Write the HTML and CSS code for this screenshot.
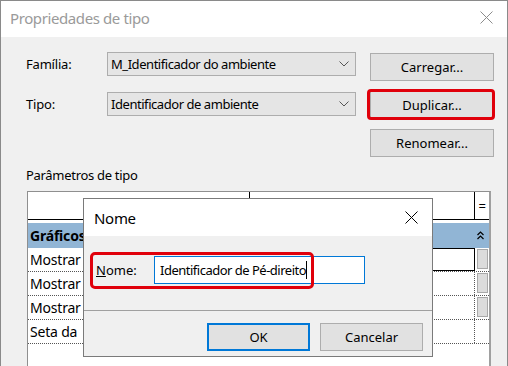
FILE: index.html
```html
<!DOCTYPE html>
<html lang="pt">
<head>
<meta charset="utf-8">
<title>Propriedades de tipo</title>
<link rel="stylesheet" href="styles.css">
</head>
<body>
<div class="window">
  <div class="titlebar">
    <span class="title">Propriedades de tipo</span>
    <svg class="close" width="13" height="13" viewBox="0 0 13 13"><path d="M0.5 0.5 L12.5 12.5 M12.5 0.5 L0.5 12.5" stroke="#8c8c8c" stroke-width="1" fill="none"/></svg>
  </div>
  <div class="content">
    <div class="top">
      <div class="fields">
        <div class="field">
          <span class="lbl">Família:</span>
          <div class="combo"><span class="ctext">M_Identificador do ambiente</span><svg class="chev" width="10" height="6" viewBox="0 0 10 6"><path d="M0.5 0.5 L5 5 L9.5 0.5" stroke="#555" stroke-width="1" fill="none"/></svg></div>
        </div>
        <div class="field">
          <span class="lbl">Tipo:</span>
          <div class="combo"><span class="ctext">Identificador de ambiente</span><svg class="chev" width="10" height="6" viewBox="0 0 10 6"><path d="M0.5 0.5 L5 5 L9.5 0.5" stroke="#555" stroke-width="1" fill="none"/></svg></div>
        </div>
      </div>
      <div class="buttons">
        <div class="btn">Carregar...</div>
        <div class="btn marked">Duplicar...</div>
        <div class="btn">Renomear...</div>
      </div>
    </div>
    <div class="params-label">Parâmetros de tipo</div>
    <div class="grid">
      <div class="ghead">
        <div class="c1"></div>
        <div class="c2"></div>
        <div class="c3 eq">=</div>
      </div>
      <div class="group">
        <span class="gname">Gráficos</span>
        <svg class="collapse" width="7" height="9" viewBox="0 0 7 9"><path d="M0.5 4 L3.5 1 L6.5 4 M0.5 8 L3.5 5 L6.5 8" stroke="#000" stroke-width="1.2" fill="none"/></svg>
      </div>
      <div class="row">
        <div class="c1">Mostrar</div>
        <div class="c2"><div class="valbox"></div></div>
        <div class="c3"><div class="mini"></div></div>
      </div>
      <div class="row">
        <div class="c1">Mostrar</div>
        <div class="c2"></div>
        <div class="c3"><div class="mini"></div></div>
      </div>
      <div class="row">
        <div class="c1">Mostrar</div>
        <div class="c2"></div>
        <div class="c3"><div class="mini"></div></div>
      </div>
      <div class="row">
        <div class="c1">Seta da</div>
        <div class="c2"></div>
        <div class="c3"></div>
      </div>
    </div>
  </div>

  <div class="dialog">
    <div class="dtitlebar">
      <span class="dtitle">Nome</span>
      <svg class="dclose" width="13" height="13" viewBox="0 0 13 13"><path d="M0.5 0.5 L12.5 12.5 M12.5 0.5 L0.5 12.5" stroke="#000" stroke-width="1" fill="none"/></svg>
    </div>
    <div class="dbody">
      <div class="namerow">
        <span class="nlabel"><u>N</u>ome:</span>
        <div class="ninput"><span class="ntext">Identificador de Pé-direito</span></div>
        <div class="redmark"></div>
      </div>
      <div class="sep"></div>
      <div class="dbuttons">
        <div class="dbtn ok">OK</div>
        <div class="dbtn">Cancelar</div>
      </div>
    </div>
  </div>
</div>
</body>
</html>
```

FILE: styles.css
```css
html, body {
  margin: 0;
  padding: 0;
  background: #f0f0f0;
}
body {
  font-family: "Noto Sans", "Open Sans", sans-serif;
  font-size: 13px;
  color: #000;
}
.window {
  position: relative;
  width: 508px;
  height: 366px;
  box-sizing: border-box;
  border: 1px solid #8a8a8a;
  border-bottom: none;
  background: #f0f0f0;
  overflow: hidden;
}
.titlebar {
  height: 36px;
  background: #fff;
  display: flex;
  align-items: center;
  justify-content: space-between;
  padding: 0 14px 0 9px;
}
.title {
  font-size: 15px;
  letter-spacing: -0.4px;
  color: #9a9a9a;
  margin-top: -2px;
}
.close {
  margin-top: -3px;
}
.content {
  padding: 15px 12px 0 25px;
}
.top {
  display: flex;
  gap: 14px;
}
.fields {
  display: flex;
  flex-direction: column;
  gap: 16px;
}
.field {
  display: flex;
  align-items: center;
  height: 24px;
}
.lbl {
  width: 81px;
  letter-spacing: -0.2px;
}
.combo {
  width: 249px;
  height: 24px;
  box-sizing: border-box;
  border: 1px solid #adadad;
  background: #e5e5e5;
  display: flex;
  align-items: center;
  justify-content: space-between;
  padding: 0 6px 0 3px;
}
.ctext {
  letter-spacing: -0.45px;
}
.buttons {
  display: flex;
  flex-direction: column;
  gap: 10px;
  margin-top: 1px;
}
.btn {
  position: relative;
  width: 124px;
  height: 28px;
  box-sizing: border-box;
  border: 1px solid #adadad;
  background: #e1e1e1;
  display: flex;
  align-items: center;
  justify-content: center;
}
.btn.marked::after {
  content: "";
  position: absolute;
  left: -4px;
  top: -3px;
  right: -2px;
  bottom: -2px;
  border: 3px solid #e0000b;
  border-radius: 4px;
}
.params-label {
  margin-top: 9px;
  height: 18px;
  line-height: 18px;
  letter-spacing: -0.3px;
}
.grid {
  margin-top: 7px;
  margin-left: 1px;
  width: 464px;
  height: 200px;
  box-sizing: border-box;
  border: 1px solid #8f8f8f;
  border-right: 2px solid #a0a0a0;
  background: #fff;
  font-size: 14px;
  letter-spacing: -0.2px;
}
.ghead, .row {
  display: grid;
  grid-template-columns: 222px 225px 1fr;
}
.ghead {
  height: 28px;
  box-sizing: border-box;
  border-bottom: 1px solid #000;
}
.ghead .c1, .ghead .c2 {
  border-right: 1px solid #000;
}
.eq {
  display: flex;
  align-items: center;
  justify-content: center;
  font-size: 13px;
}
.group {
  margin-top: 3px;
  height: 25px;
  background: #91b5d5;
  display: flex;
  align-items: center;
  justify-content: space-between;
  padding: 0 5px 0 2px;
}
.gname {
  font-weight: bold;
}
.row {
  height: 24px;
  box-sizing: border-box;
  border-bottom: 1px dotted #555;
}
.row .c1 {
  padding-left: 2px;
  line-height: 23px;
}
.row .c2 {
  border-right: 1px dotted #555;
}
.valbox {
  height: 23px;
  box-sizing: border-box;
  border: 1px solid #000;
  margin-right: -1px;
  background: #fff;
}
.row .c3 {
  display: flex;
  justify-content: center;
  padding-top: 1px;
}
.mini {
  width: 11px;
  height: 20px;
  box-sizing: border-box;
  background: #dcdcdc;
  border: 1px solid #a9a9a9;
}

/* Nome dialog */
.dialog {
  position: absolute;
  left: 82px;
  top: 197px;
  width: 350px;
  height: 159px;
  box-sizing: border-box;
  border: 1px solid #7a7a7a;
  background: #f0f0f0;
  font-size: 13px;
}
.dtitlebar {
  height: 37px;
  background: #fff;
  display: flex;
  align-items: center;
  justify-content: space-between;
  padding: 0 14px 0 10px;
}
.dtitle {
  font-size: 15px;
  letter-spacing: -0.3px;
}
.dbody {
  padding-top: 20px;
}
.namerow {
  position: relative;
  display: flex;
  align-items: center;
  padding-left: 12px;
}
.nlabel {
  width: 58px;
}
.ninput {
  width: 211px;
  height: 28px;
  box-sizing: border-box;
  border: 1px solid #0078d7;
  background: #fff;
  display: flex;
  align-items: center;
  padding-left: 5px;
}
.ntext {
  border-right: 1px solid #000;
  line-height: 18px;
  letter-spacing: -0.5px;
}
.redmark {
  position: absolute;
  left: 6px;
  top: -4px;
  width: 224px;
  height: 37px;
  box-sizing: border-box;
  border: 3px solid #e0000b;
  border-radius: 5px;
}
.sep {
  margin-top: 26px;
  height: 1px;
  background: #a0a0a0;
}
.dbuttons {
  display: flex;
  justify-content: flex-end;
  gap: 10px;
  padding: 12px 9px 0 0;
}
.dbtn {
  width: 103px;
  height: 28px;
  box-sizing: border-box;
  border: 1px solid #adadad;
  background: #e1e1e1;
  display: flex;
  align-items: center;
  justify-content: center;
}
.dbtn.ok {
  border: 2px solid #0078d7;
}
```
